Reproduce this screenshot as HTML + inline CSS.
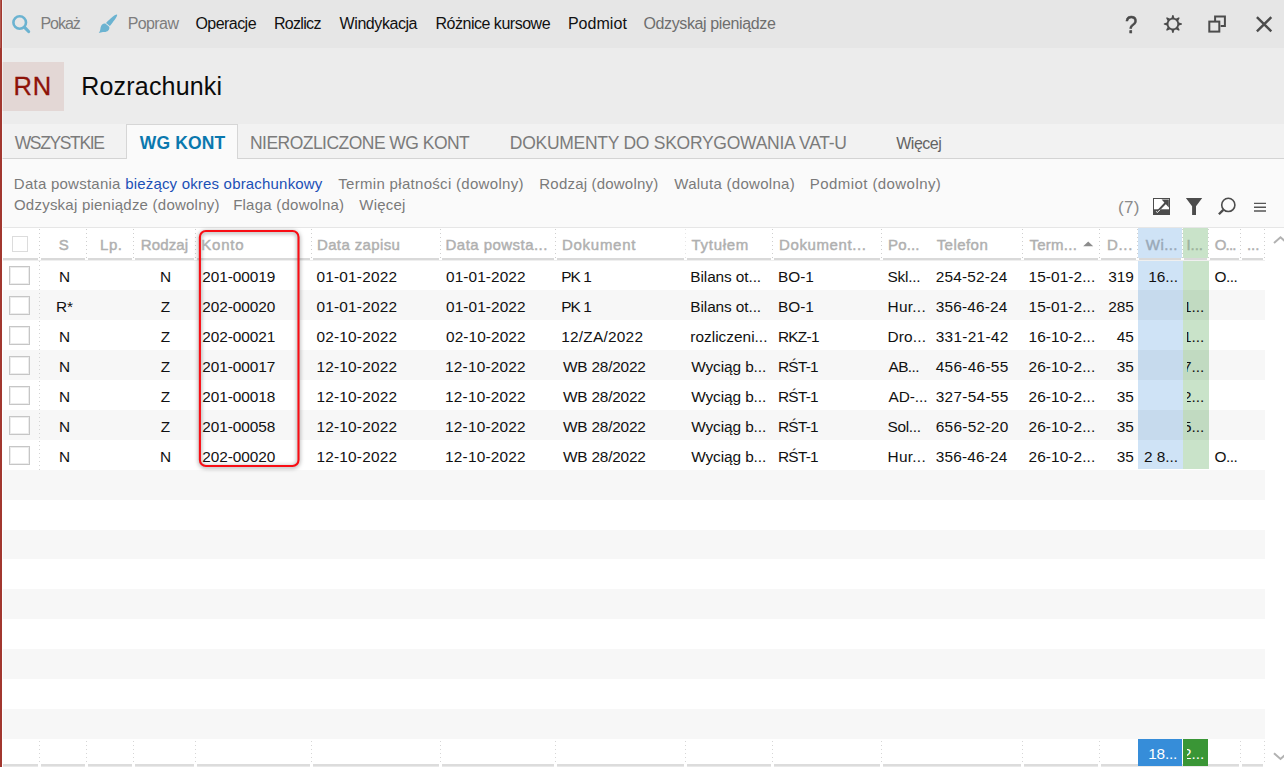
<!DOCTYPE html>
<html lang="pl"><head><meta charset="utf-8"><title>Rozrachunki</title>
<style>
html,body{margin:0;padding:0;}
body{width:1284px;height:767px;overflow:hidden;background:#fff;position:relative;font-family:"Liberation Sans",sans-serif;}
.b{position:absolute;}
.t{position:absolute;white-space:pre;line-height:20px;height:20px;}
.sep{width:1px;background:repeating-linear-gradient(to bottom,var(--c) 0,var(--c) 1px,transparent 1px,transparent 4px);}
svg{position:absolute;overflow:visible;}
</style></head><body>
<div class="b" style="left:0px;top:0px;width:1284px;height:48px;background:#e6e6e6;"></div>
<div class="b" style="left:0px;top:48px;width:1284px;height:76px;background:#ececec;"></div>
<div class="b" style="left:2px;top:62px;width:62px;height:49px;background:#e3d7d5;"></div>
<div class="b" style="left:0px;top:124px;width:1284px;height:35px;background:#f2f2f2;"></div>
<div class="b" style="left:0px;top:159px;width:1284px;height:69px;background:#fafafa;"></div>
<div class="b" style="left:0px;top:158px;width:1284px;height:1px;background:#d4d4d4;"></div>
<div class="b" style="left:126px;top:124px;width:112px;height:34px;background:#fafafa;border:1px solid #d6d6d6;border-bottom:none;box-sizing:border-box;height:35px;"></div>
<div class="b" style="left:3px;top:227px;width:1281px;height:1px;background:#e6e6e6;"></div>
<div class="b" style="left:3px;top:228px;width:1262px;height:30px;background:#fff;"></div>
<div class="b" style="left:3px;top:290px;width:1262px;height:30px;background:#f7f7f7;"></div>
<div class="b" style="left:3px;top:350px;width:1262px;height:30px;background:#f7f7f7;"></div>
<div class="b" style="left:3px;top:410px;width:1262px;height:30px;background:#f7f7f7;"></div>
<div class="b" style="left:3px;top:470px;width:1262px;height:30px;background:#f7f7f7;"></div>
<div class="b" style="left:3px;top:530px;width:1262px;height:29px;background:#f7f7f7;"></div>
<div class="b" style="left:3px;top:589px;width:1262px;height:30px;background:#f7f7f7;"></div>
<div class="b" style="left:3px;top:649px;width:1262px;height:30px;background:#f7f7f7;"></div>
<div class="b" style="left:3px;top:709px;width:1262px;height:30px;background:#f7f7f7;"></div>
<div class="b" style="left:1138px;top:228px;width:44px;height:30px;background:#cfe3f6;"></div>
<div class="b" style="left:1183px;top:228px;width:25px;height:30px;background:#c9e3c9;"></div>
<div class="b" style="left:1138px;top:261px;width:45px;height:29px;background:#cfe3f6;"></div>
<div class="b" style="left:1183px;top:261px;width:26px;height:29px;background:#c9e3c9;"></div>
<div class="b" style="left:1138px;top:290px;width:45px;height:30px;background:#c6daed;"></div>
<div class="b" style="left:1183px;top:290px;width:26px;height:30px;background:#c1dac1;"></div>
<div class="b" style="left:1138px;top:320px;width:45px;height:30px;background:#cfe3f6;"></div>
<div class="b" style="left:1183px;top:320px;width:26px;height:30px;background:#c9e3c9;"></div>
<div class="b" style="left:1138px;top:350px;width:45px;height:30px;background:#c6daed;"></div>
<div class="b" style="left:1183px;top:350px;width:26px;height:30px;background:#c1dac1;"></div>
<div class="b" style="left:1138px;top:380px;width:45px;height:30px;background:#cfe3f6;"></div>
<div class="b" style="left:1183px;top:380px;width:26px;height:30px;background:#c9e3c9;"></div>
<div class="b" style="left:1138px;top:410px;width:45px;height:30px;background:#c6daed;"></div>
<div class="b" style="left:1183px;top:410px;width:26px;height:30px;background:#c1dac1;"></div>
<div class="b" style="left:1138px;top:440px;width:45px;height:29px;background:#cfe3f6;"></div>
<div class="b" style="left:1183px;top:440px;width:26px;height:29px;background:#c9e3c9;"></div>
<div class="b" style="left:3px;top:258px;width:1262px;height:2px;background:#d9d9d9;"></div>
<div class="b" style="left:3px;top:260px;width:1262px;height:1px;background:#efefef;"></div>
<div class="b sep" style="left:39px;top:229px;height:30px;--c:#cfcfcf"></div>
<div class="b sep" style="left:39px;top:741px;height:24px;--c:#d6d6d6"></div>
<div class="b sep" style="left:86px;top:229px;height:30px;--c:#cfcfcf"></div>
<div class="b sep" style="left:86px;top:741px;height:24px;--c:#d6d6d6"></div>
<div class="b sep" style="left:133px;top:229px;height:30px;--c:#cfcfcf"></div>
<div class="b sep" style="left:133px;top:741px;height:24px;--c:#d6d6d6"></div>
<div class="b sep" style="left:195px;top:229px;height:30px;--c:#cfcfcf"></div>
<div class="b sep" style="left:195px;top:741px;height:24px;--c:#d6d6d6"></div>
<div class="b sep" style="left:311px;top:229px;height:30px;--c:#cfcfcf"></div>
<div class="b sep" style="left:311px;top:741px;height:24px;--c:#d6d6d6"></div>
<div class="b sep" style="left:440px;top:229px;height:30px;--c:#cfcfcf"></div>
<div class="b sep" style="left:440px;top:741px;height:24px;--c:#d6d6d6"></div>
<div class="b sep" style="left:555px;top:229px;height:30px;--c:#cfcfcf"></div>
<div class="b sep" style="left:555px;top:741px;height:24px;--c:#d6d6d6"></div>
<div class="b sep" style="left:685px;top:229px;height:30px;--c:#e6e6e6"></div>
<div class="b sep" style="left:685px;top:741px;height:24px;--c:#d6d6d6"></div>
<div class="b sep" style="left:772px;top:229px;height:30px;--c:#cfcfcf"></div>
<div class="b sep" style="left:772px;top:741px;height:24px;--c:#d6d6d6"></div>
<div class="b sep" style="left:881px;top:229px;height:30px;--c:#cfcfcf"></div>
<div class="b sep" style="left:881px;top:741px;height:24px;--c:#d6d6d6"></div>
<div class="b sep" style="left:1022px;top:229px;height:30px;--c:#cfcfcf"></div>
<div class="b sep" style="left:1022px;top:741px;height:24px;--c:#d6d6d6"></div>
<div class="b sep" style="left:1099px;top:229px;height:30px;--c:#cfcfcf"></div>
<div class="b sep" style="left:1099px;top:741px;height:24px;--c:#d6d6d6"></div>
<div class="b sep" style="left:1137px;top:229px;height:30px;--c:#cfcfcf"></div>
<div class="b sep" style="left:1182px;top:229px;height:30px;--c:#cfcfcf"></div>
<div class="b sep" style="left:1208px;top:229px;height:30px;--c:#cfcfcf"></div>
<div class="b sep" style="left:1240px;top:229px;height:30px;--c:#cfcfcf"></div>
<div class="b sep" style="left:1240px;top:741px;height:24px;--c:#d6d6d6"></div>
<div class="b sep" style="left:1264px;top:229px;height:30px;--c:#cfcfcf"></div>
<div class="b sep" style="left:1264px;top:741px;height:24px;--c:#d6d6d6"></div>
<div class="b sep" style="left:39px;top:261px;height:210px;--c:#d4d4d4"></div>
<div class="b" style="left:38px;top:258px;width:3px;height:2px;background:#fff;"></div>
<div class="b" style="left:85px;top:258px;width:3px;height:2px;background:#fff;"></div>
<div class="b" style="left:132px;top:258px;width:3px;height:2px;background:#fff;"></div>
<div class="b" style="left:194px;top:258px;width:3px;height:2px;background:#fff;"></div>
<div class="b" style="left:310px;top:258px;width:3px;height:2px;background:#fff;"></div>
<div class="b" style="left:439px;top:258px;width:3px;height:2px;background:#fff;"></div>
<div class="b" style="left:554px;top:258px;width:3px;height:2px;background:#fff;"></div>
<div class="b" style="left:684px;top:258px;width:3px;height:2px;background:#fff;"></div>
<div class="b" style="left:771px;top:258px;width:3px;height:2px;background:#fff;"></div>
<div class="b" style="left:880px;top:258px;width:3px;height:2px;background:#fff;"></div>
<div class="b" style="left:1021px;top:258px;width:3px;height:2px;background:#fff;"></div>
<div class="b" style="left:1098px;top:258px;width:3px;height:2px;background:#fff;"></div>
<div class="b" style="left:1136px;top:258px;width:3px;height:2px;background:#fff;"></div>
<div class="b" style="left:1181px;top:258px;width:3px;height:2px;background:#fff;"></div>
<div class="b" style="left:1207px;top:258px;width:3px;height:2px;background:#fff;"></div>
<div class="b" style="left:1239px;top:258px;width:3px;height:2px;background:#fff;"></div>
<div class="b" style="left:1263px;top:258px;width:3px;height:2px;background:#fff;"></div>
<div class="b" style="left:12px;top:236px;width:16px;height:16px;background:#fff;border:1px solid #dcdcdc;box-sizing:border-box;"></div>
<div class="b" style="left:9px;top:266px;width:21px;height:19px;background:#fff;border:1px solid #c6c6c6;box-sizing:border-box;box-shadow:inset 0 0 0 1px #ececec;"></div>
<div class="b" style="left:9px;top:296px;width:21px;height:19px;background:#fff;border:1px solid #c6c6c6;box-sizing:border-box;box-shadow:inset 0 0 0 1px #ececec;"></div>
<div class="b" style="left:9px;top:326px;width:21px;height:19px;background:#fff;border:1px solid #c6c6c6;box-sizing:border-box;box-shadow:inset 0 0 0 1px #ececec;"></div>
<div class="b" style="left:9px;top:356px;width:21px;height:19px;background:#fff;border:1px solid #c6c6c6;box-sizing:border-box;box-shadow:inset 0 0 0 1px #ececec;"></div>
<div class="b" style="left:9px;top:386px;width:21px;height:19px;background:#fff;border:1px solid #c6c6c6;box-sizing:border-box;box-shadow:inset 0 0 0 1px #ececec;"></div>
<div class="b" style="left:9px;top:416px;width:21px;height:19px;background:#fff;border:1px solid #c6c6c6;box-sizing:border-box;box-shadow:inset 0 0 0 1px #ececec;"></div>
<div class="b" style="left:9px;top:446px;width:21px;height:19px;background:#fff;border:1px solid #c6c6c6;box-sizing:border-box;box-shadow:inset 0 0 0 1px #ececec;"></div>
<div class="b" style="left:1138px;top:739px;width:44px;height:27px;background:#368dd9;"></div>
<div class="b" style="left:1183px;top:739px;width:25px;height:27px;background:#3a9636;"></div>
<div class="b" style="left:3px;top:764px;width:1262px;height:2px;background:#dcdcdc;"></div>
<div class="b" style="left:3px;top:766px;width:1262px;height:1px;background:#e9e9e9;"></div>
<div class="b" style="left:38px;top:764px;width:3px;height:3px;background:#fff;"></div>
<div class="b" style="left:85px;top:764px;width:3px;height:3px;background:#fff;"></div>
<div class="b" style="left:132px;top:764px;width:3px;height:3px;background:#fff;"></div>
<div class="b" style="left:194px;top:764px;width:3px;height:3px;background:#fff;"></div>
<div class="b" style="left:310px;top:764px;width:3px;height:3px;background:#fff;"></div>
<div class="b" style="left:439px;top:764px;width:3px;height:3px;background:#fff;"></div>
<div class="b" style="left:554px;top:764px;width:3px;height:3px;background:#fff;"></div>
<div class="b" style="left:684px;top:764px;width:3px;height:3px;background:#fff;"></div>
<div class="b" style="left:771px;top:764px;width:3px;height:3px;background:#fff;"></div>
<div class="b" style="left:880px;top:764px;width:3px;height:3px;background:#fff;"></div>
<div class="b" style="left:1021px;top:764px;width:3px;height:3px;background:#fff;"></div>
<div class="b" style="left:1098px;top:764px;width:3px;height:3px;background:#fff;"></div>
<div class="b" style="left:1239px;top:764px;width:3px;height:3px;background:#fff;"></div>
<div class="b" style="left:1263px;top:764px;width:3px;height:3px;background:#fff;"></div>
<div class="b" style="left:1138px;top:739px;width:44px;height:27px;background:#368dd9;"></div>
<div class="b" style="left:1183px;top:739px;width:25px;height:27px;background:#3a9636;"></div>
<div class="b" style="left:0px;top:0px;width:2px;height:767px;background:#a2372f;"></div>
<div class="b" style="left:0px;top:0px;width:1px;height:48px;background:#b1584f;"></div>
<div class="b" style="left:2px;top:0px;width:1px;height:767px;background:rgba(255,255,255,.55);"></div>
<svg width="1284" height="767" viewBox="0 0 1284 767" style="left:0;top:0">
<g fill="none" stroke="#6bb3d1" stroke-linecap="round"><circle cx="19.7" cy="22.5" r="6.3" stroke-width="2.6"/><path d="M24.6 27.4 L28.6 31.5" stroke-width="3.2"/></g>
<g fill="#6bb3d1"><path d="M117 14.6 C117.8 15.4 115.6 19.2 109.9 25.9 L106 22.9 C111.5 17.3 116.1 13.8 117 14.6 Z"/><path d="M105.3 23.6 L109.2 26.8 C110.2 30 106.8 32.6 103.4 32 C101.8 31.8 100.4 32.8 98.8 33 C100.4 31.2 100.2 29.6 100.6 27.6 C101.2 24.8 103.2 23.2 105.3 23.6 Z"/></g>
<path d="M1171.38 17.89 L1172.41 14.91 L1173.39 14.91 L1174.42 17.89 L1176.15 18.60 L1178.98 17.23 L1179.67 17.92 L1178.30 20.75 L1179.01 22.48 L1181.99 23.51 L1181.99 24.49 L1179.01 25.52 L1178.30 27.25 L1179.67 30.08 L1178.98 30.77 L1176.15 29.40 L1174.42 30.11 L1173.39 33.09 L1172.41 33.09 L1171.38 30.11 L1169.65 29.40 L1166.82 30.77 L1166.13 30.08 L1167.50 27.25 L1166.79 25.52 L1163.81 24.49 L1163.81 23.51 L1166.79 22.48 L1167.50 20.75 L1166.13 17.92 L1166.82 17.23 L1169.65 18.60 Z M1177.35 24 A4.45 4.45 0 1 0 1168.45 24 A4.45 4.45 0 1 0 1177.35 24 Z" fill="#4c4c4c" fill-rule="evenodd"/>
<g fill="none" stroke="#4c4c4c" stroke-width="2"><rect x="1209.3" y="21.6" width="10" height="10"/><path d="M1215.1 21 V16.5 H1224.9 V26.1 H1220.6"/></g>
<path d="M1256.9 17.2 L1271.3 31.3 M1271.3 17.2 L1256.9 31.3" stroke="#4c4c4c" stroke-width="2.4" fill="none"/>
<g><rect x="1153.5" y="198.5" width="16" height="16" fill="#fff" stroke="#4c4c4c" stroke-width="1"/><rect x="1153" y="209.3" width="17" height="5.7" fill="#4c4c4c"/><path d="M1158.2 210.6 L1166.2 202.2" stroke="#4c4c4c" stroke-width="2" fill="none"/><path d="M1161.6 199.6 H1168.8 V207.4 Z" fill="#4c4c4c"/><path d="M1156.2 211.2 L1157.3 212.6 L1160 209.8" stroke="#fff" stroke-width="0.9" fill="none"/></g>
<path d="M1185.9 198 H1202.2 L1196 206.2 V215 H1192.1 V206.2 Z" fill="#4c4c4c"/>
<g fill="none" stroke="#4c4c4c"><circle cx="1228.3" cy="204.9" r="6.6" stroke-width="1.6"/><path d="M1223.3 209.9 L1218.9 214.3" stroke-width="2.3"/></g>
<path d="M1254 203.4 H1266 M1254 207.2 H1266 M1254 211 H1266" stroke="#555" stroke-width="1.4" fill="none"/>
<path d="M1083.2 246.3 L1088.2 241.6 L1093.2 246.3 Z" fill="#8c8c8c"/>
<path d="M1274 243 L1280.5 237.3 L1287 243" stroke="#b2b2b2" stroke-width="2" fill="none"/>
<path d="M1274 753.3 L1280.5 759 L1287 753.3" stroke="#b2b2b2" stroke-width="2" fill="none"/>
<rect x="199.9" y="231" width="98.6" height="235" rx="6" ry="6" fill="none" stroke="#f90d14" stroke-width="2.1" style="filter:drop-shadow(0 1px 2px rgba(0,0,0,.5))"/>
</svg>
<nav class="toolbar">
<span class="t" id="t0" style="top:14.46px;font-size:16px;color:#7d7d7d;letter-spacing:-1.038px;left:40.43px;">Pokaż</span>
<span class="t" id="t1" style="top:14.46px;font-size:16px;color:#7d7d7d;letter-spacing:-0.585px;left:127.63px;">Popraw</span>
<span class="t" id="t2" style="top:14.46px;font-size:16px;color:#111;letter-spacing:-0.538px;left:195.38px;">Operacje</span>
<span class="t" id="t3" style="top:14.46px;font-size:16px;color:#111;letter-spacing:-0.665px;left:273.88px;">Rozlicz</span>
<span class="t" id="t4" style="top:14.46px;font-size:16px;color:#111;letter-spacing:-0.429px;left:339.58px;">Windykacja</span>
<span class="t" id="t5" style="top:14.46px;font-size:16px;color:#111;letter-spacing:-0.481px;left:435.48px;">Różnice kursowe</span>
<span class="t" id="t6" style="top:14.46px;font-size:16px;color:#111;letter-spacing:0.050px;left:567.88px;">Podmiot</span>
<span class="t" id="t7" style="top:14.46px;font-size:16px;color:#6e6e6e;letter-spacing:-0.369px;left:643.43px;">Odzyskaj pieniądze</span>
</nav>
<header class="title">
<span class="t" id="t8" style="top:76.16px;font-size:25.5px;color:#8e1208;letter-spacing:0.763px;left:13.62px;-webkit-text-stroke:0.3px;">RN</span>
<span class="t" id="t9" style="top:76.34px;font-size:25px;color:#0a0a0a;letter-spacing:0.190px;left:81.25px;">Rozrachunki</span>
</header>
<nav class="window-buttons">
<span class="t" id="t10" style="top:14.51px;font-size:24.5px;color:#4a4a4a;left:1125.03px;-webkit-text-stroke:0.55px;transform:scaleX(0.9);transform-origin:0 0;">?</span>
</nav>
<nav class="tabs">
<span class="t" id="t11" style="top:132.94px;font-size:17.5px;color:#7b7b7b;letter-spacing:-1.366px;left:14.68px;">WSZYSTKIE</span>
<span class="t" id="t12" style="top:132.94px;font-size:17.5px;color:#0a78ae;font-weight:700;letter-spacing:0.137px;left:139.82px;">WG KONT</span>
<span class="t" id="t13" style="top:132.94px;font-size:17.5px;color:#7b7b7b;letter-spacing:-0.534px;left:250.02px;">NIEROZLICZONE WG KONT</span>
<span class="t" id="t14" style="top:132.94px;font-size:17.5px;color:#7b7b7b;letter-spacing:-0.269px;left:509.77px;">DOKUMENTY DO SKORYGOWANIA VAT-U</span>
<span class="t" id="t15" style="top:134.06px;font-size:16px;color:#636363;letter-spacing:-0.470px;left:896.18px;">Więcej</span>
</nav>
<section class="filters">
<span class="t" id="t16" style="top:173.50px;font-size:15px;color:#7a7a7a;letter-spacing:0.246px;left:13.80px;">Data powstania</span>
<span class="t" id="t17" style="top:173.50px;font-size:15px;color:#1b50b6;letter-spacing:0.185px;left:125.15px;">bieżący okres obrachunkowy</span>
<span class="t" id="t18" style="top:173.50px;font-size:15px;color:#7a7a7a;letter-spacing:0.304px;left:338.30px;">Termin płatności (dowolny)</span>
<span class="t" id="t19" style="top:173.50px;font-size:15px;color:#7a7a7a;letter-spacing:0.194px;left:539.35px;">Rodzaj (dowolny)</span>
<span class="t" id="t20" style="top:173.50px;font-size:15px;color:#7a7a7a;letter-spacing:0.283px;left:674.25px;">Waluta (dowolna)</span>
<span class="t" id="t21" style="top:173.50px;font-size:15px;color:#7a7a7a;letter-spacing:0.429px;left:809.75px;">Podmiot (dowolny)</span>
<span class="t" id="t22" style="top:194.70px;font-size:15px;color:#7a7a7a;letter-spacing:0.232px;left:13.95px;">Odzyskaj pieniądze (dowolny)</span>
<span class="t" id="t23" style="top:194.70px;font-size:15px;color:#7a7a7a;letter-spacing:0.243px;left:233.15px;">Flaga (dowolna)</span>
<span class="t" id="t24" style="top:194.70px;font-size:15px;color:#7a7a7a;letter-spacing:0.233px;left:359.25px;">Więcej</span>
<span class="t" id="t25" style="top:198.31px;font-size:17px;color:#8a8a8a;letter-spacing:0.384px;left:1117.96px;">(7)</span>
</section>
<div class="thead">
<span class="t" id="t26" style="top:234.70px;font-size:15px;color:#b0b0b0;-webkit-text-stroke:0.45px;letter-spacing:-4.626px;left:58.65px;">S</span>
<span class="t" id="t27" style="top:234.70px;font-size:15px;color:#b0b0b0;-webkit-text-stroke:0.45px;letter-spacing:0.492px;left:100.10px;">Lp.</span>
<span class="t" id="t28" style="top:234.70px;font-size:15px;color:#b0b0b0;-webkit-text-stroke:0.45px;letter-spacing:0.144px;left:140.70px;">Rodzaj</span>
<span class="t" id="t29" style="top:234.70px;font-size:15px;color:#b0b0b0;-webkit-text-stroke:0.45px;letter-spacing:0.773px;left:201.35px;">Konto</span>
<span class="t" id="t30" style="top:234.70px;font-size:15px;color:#b0b0b0;-webkit-text-stroke:0.45px;letter-spacing:0.369px;left:316.95px;">Data zapisu</span>
<span class="t" id="t31" style="top:234.70px;font-size:15px;color:#b0b0b0;-webkit-text-stroke:0.45px;letter-spacing:0.459px;left:445.55px;">Data powsta...</span>
<span class="t" id="t32" style="top:234.70px;font-size:15px;color:#b0b0b0;-webkit-text-stroke:0.45px;letter-spacing:0.742px;left:561.90px;">Dokument</span>
<span class="t" id="t33" style="top:234.70px;font-size:15px;color:#b0b0b0;-webkit-text-stroke:0.45px;letter-spacing:0.736px;left:691.45px;">Tytułem</span>
<span class="t" id="t34" style="top:234.70px;font-size:15px;color:#b0b0b0;-webkit-text-stroke:0.45px;letter-spacing:0.595px;left:779.10px;">Dokument...</span>
<span class="t" id="t35" style="top:234.70px;font-size:15px;color:#b0b0b0;-webkit-text-stroke:0.45px;letter-spacing:0.094px;left:888.10px;">Po...</span>
<span class="t" id="t36" style="top:234.70px;font-size:15px;color:#b0b0b0;-webkit-text-stroke:0.45px;letter-spacing:0.454px;left:936.65px;">Telefon</span>
<span class="t" id="t37" style="top:234.70px;font-size:15px;color:#b0b0b0;-webkit-text-stroke:0.45px;letter-spacing:0.255px;left:1029.45px;">Term...</span>
<span class="t" id="t38" style="top:234.70px;font-size:15px;color:#b0b0b0;-webkit-text-stroke:0.45px;letter-spacing:0.677px;left:1106.95px;">D...</span>
<span class="t" id="t39" style="top:234.70px;font-size:15px;color:#9aa9b8;-webkit-text-stroke:0.45px;letter-spacing:0.417px;left:1145.85px;">Wi...</span>
<span class="t" id="t40" style="top:234.70px;font-size:15px;color:#9db39d;-webkit-text-stroke:0.45px;letter-spacing:-0.109px;left:1186.55px;">I...</span>
<span class="t" id="t41" style="top:234.70px;font-size:15px;color:#b0b0b0;-webkit-text-stroke:0.45px;letter-spacing:-0.773px;left:1214.70px;">O...</span>
<span class="t" id="t42" style="top:234.70px;font-size:15px;color:#b0b0b0;-webkit-text-stroke:0.45px;letter-spacing:0.045px;left:1246.90px;">...</span>
</div>
<div class="tr r1">
<span class="t" id="t43" style="top:267.06px;font-size:15.4px;color:#111;left:14.50px;width:100px;text-align:center;">N</span>
<span class="t" id="t44" style="top:267.06px;font-size:15.4px;color:#111;left:115.50px;width:100px;text-align:center;">N</span>
<span class="t" id="t45" style="top:267.06px;font-size:15.4px;color:#111;letter-spacing:-0.071px;left:202.22px;">201-00019</span>
<span class="t" id="t46" style="top:267.06px;font-size:15.4px;color:#111;letter-spacing:0.193px;left:316.52px;">01-01-2022</span>
<span class="t" id="t47" style="top:267.06px;font-size:15.4px;color:#111;letter-spacing:0.093px;left:446.02px;">01-01-2022</span>
<span class="t" id="t48" style="top:267.06px;font-size:15.4px;color:#111;letter-spacing:-0.867px;left:561.17px;">PK 1</span>
<span class="t" id="t49" style="top:267.06px;font-size:15.4px;color:#111;letter-spacing:-0.097px;left:690.32px;">Bilans ot...</span>
<span class="t" id="t50" style="top:267.06px;font-size:15.4px;color:#111;letter-spacing:0.012px;left:777.97px;">BO-1</span>
<span class="t" id="t51" style="top:267.06px;font-size:15.4px;color:#111;letter-spacing:-0.233px;left:887.52px;">Skl...</span>
<span class="t" id="t52" style="top:267.06px;font-size:15.4px;color:#111;letter-spacing:0.192px;left:935.67px;">254-52-24</span>
<span class="t" id="t53" style="top:267.06px;font-size:15.4px;color:#111;letter-spacing:0.089px;left:1028.52px;">15-01-2...</span>
<span class="t" id="t54" style="top:267.06px;font-size:15.4px;color:#111;left:1033.86px;width:100px;text-align:right;">319</span>
<span class="t" id="t55" style="top:267.06px;font-size:15.4px;color:#111;left:1078.16px;width:100px;text-align:right;">16...</span>
<span class="t" id="t56" style="top:267.06px;font-size:15.4px;color:#111;letter-spacing:-0.535px;left:1214.52px;">O...</span>
</div>
<div class="tr r2">
<span class="t" id="t57" style="top:296.93px;font-size:15.4px;color:#111;left:14.50px;width:100px;text-align:center;">R*</span>
<span class="t" id="t58" style="top:296.93px;font-size:15.4px;color:#111;left:115.50px;width:100px;text-align:center;">Z</span>
<span class="t" id="t59" style="top:296.93px;font-size:15.4px;color:#111;letter-spacing:-0.071px;left:202.22px;">202-00020</span>
<span class="t" id="t60" style="top:296.93px;font-size:15.4px;color:#111;letter-spacing:0.193px;left:316.52px;">01-01-2022</span>
<span class="t" id="t61" style="top:296.93px;font-size:15.4px;color:#111;letter-spacing:0.093px;left:446.02px;">01-01-2022</span>
<span class="t" id="t62" style="top:296.93px;font-size:15.4px;color:#111;letter-spacing:-0.867px;left:561.17px;">PK 1</span>
<span class="t" id="t63" style="top:296.93px;font-size:15.4px;color:#111;letter-spacing:-0.097px;left:690.32px;">Bilans ot...</span>
<span class="t" id="t64" style="top:296.93px;font-size:15.4px;color:#111;letter-spacing:0.012px;left:777.97px;">BO-1</span>
<span class="t" id="t65" style="top:296.93px;font-size:15.4px;color:#111;letter-spacing:0.283px;left:887.52px;">Hur...</span>
<span class="t" id="t66" style="top:296.93px;font-size:15.4px;color:#111;letter-spacing:0.192px;left:935.67px;">356-46-24</span>
<span class="t" id="t67" style="top:296.93px;font-size:15.4px;color:#111;letter-spacing:0.089px;left:1028.52px;">15-01-2...</span>
<span class="t" id="t68" style="top:296.93px;font-size:15.4px;color:#111;left:1033.86px;width:100px;text-align:right;">285</span>
<span class="t" id="t69" style="top:296.93px;font-size:15.4px;color:#111;left:1187.40px;width:20px;overflow:hidden;text-indent:-4.4px;">1...</span>
</div>
<div class="tr r3">
<span class="t" id="t70" style="top:326.80px;font-size:15.4px;color:#111;left:14.50px;width:100px;text-align:center;">N</span>
<span class="t" id="t71" style="top:326.80px;font-size:15.4px;color:#111;left:115.50px;width:100px;text-align:center;">Z</span>
<span class="t" id="t72" style="top:326.80px;font-size:15.4px;color:#111;letter-spacing:-0.071px;left:202.22px;">202-00021</span>
<span class="t" id="t73" style="top:326.80px;font-size:15.4px;color:#111;letter-spacing:0.193px;left:316.52px;">02-10-2022</span>
<span class="t" id="t74" style="top:326.80px;font-size:15.4px;color:#111;letter-spacing:0.093px;left:446.02px;">02-10-2022</span>
<span class="t" id="t75" style="top:326.80px;font-size:15.4px;color:#111;letter-spacing:0.249px;left:561.17px;">12/ZA/2022</span>
<span class="t" id="t76" style="top:326.80px;font-size:15.4px;color:#111;letter-spacing:0.010px;left:690.32px;">rozliczeni...</span>
<span class="t" id="t77" style="top:326.80px;font-size:15.4px;color:#111;letter-spacing:-0.741px;left:777.97px;">RKZ-1</span>
<span class="t" id="t78" style="top:326.80px;font-size:15.4px;color:#111;letter-spacing:0.163px;left:887.52px;">Dro...</span>
<span class="t" id="t79" style="top:326.80px;font-size:15.4px;color:#111;letter-spacing:0.305px;left:935.67px;">331-21-42</span>
<span class="t" id="t80" style="top:326.80px;font-size:15.4px;color:#111;letter-spacing:0.089px;left:1028.52px;">16-10-2...</span>
<span class="t" id="t81" style="top:326.80px;font-size:15.4px;color:#111;left:1033.86px;width:100px;text-align:right;">45</span>
<span class="t" id="t82" style="top:326.80px;font-size:15.4px;color:#111;left:1187.40px;width:20px;overflow:hidden;text-indent:-4.4px;">1...</span>
</div>
<div class="tr r4">
<span class="t" id="t83" style="top:356.67px;font-size:15.4px;color:#111;left:14.50px;width:100px;text-align:center;">N</span>
<span class="t" id="t84" style="top:356.67px;font-size:15.4px;color:#111;left:115.50px;width:100px;text-align:center;">Z</span>
<span class="t" id="t85" style="top:356.67px;font-size:15.4px;color:#111;letter-spacing:-0.071px;left:202.22px;">201-00017</span>
<span class="t" id="t86" style="top:356.67px;font-size:15.4px;color:#111;letter-spacing:0.193px;left:316.52px;">12-10-2022</span>
<span class="t" id="t87" style="top:356.67px;font-size:15.4px;color:#111;letter-spacing:0.193px;left:445.12px;">12-10-2022</span>
<span class="t" id="t88" style="top:356.67px;font-size:15.4px;color:#111;letter-spacing:-0.196px;left:562.97px;">WB 28/2022</span>
<span class="t" id="t89" style="top:356.67px;font-size:15.4px;color:#111;letter-spacing:-0.097px;left:691.22px;">Wyciąg b...</span>
<span class="t" id="t90" style="top:356.67px;font-size:15.4px;color:#111;letter-spacing:-0.730px;left:777.97px;">RŚT-1</span>
<span class="t" id="t91" style="top:356.67px;font-size:15.4px;color:#111;letter-spacing:-0.539px;left:888.42px;">AB...</span>
<span class="t" id="t92" style="top:356.67px;font-size:15.4px;color:#111;letter-spacing:0.305px;left:935.67px;">456-46-55</span>
<span class="t" id="t93" style="top:356.67px;font-size:15.4px;color:#111;letter-spacing:0.089px;left:1028.52px;">26-10-2...</span>
<span class="t" id="t94" style="top:356.67px;font-size:15.4px;color:#111;left:1033.86px;width:100px;text-align:right;">35</span>
<span class="t" id="t95" style="top:356.67px;font-size:15.4px;color:#111;left:1187.40px;width:20px;overflow:hidden;text-indent:-4.4px;">7...</span>
</div>
<div class="tr r5">
<span class="t" id="t96" style="top:386.54px;font-size:15.4px;color:#111;left:14.50px;width:100px;text-align:center;">N</span>
<span class="t" id="t97" style="top:386.54px;font-size:15.4px;color:#111;left:115.50px;width:100px;text-align:center;">Z</span>
<span class="t" id="t98" style="top:386.54px;font-size:15.4px;color:#111;letter-spacing:-0.071px;left:202.22px;">201-00018</span>
<span class="t" id="t99" style="top:386.54px;font-size:15.4px;color:#111;letter-spacing:0.193px;left:316.52px;">12-10-2022</span>
<span class="t" id="t100" style="top:386.54px;font-size:15.4px;color:#111;letter-spacing:0.193px;left:445.12px;">12-10-2022</span>
<span class="t" id="t101" style="top:386.54px;font-size:15.4px;color:#111;letter-spacing:-0.196px;left:562.97px;">WB 28/2022</span>
<span class="t" id="t102" style="top:386.54px;font-size:15.4px;color:#111;letter-spacing:-0.097px;left:691.22px;">Wyciąg b...</span>
<span class="t" id="t103" style="top:386.54px;font-size:15.4px;color:#111;letter-spacing:-0.730px;left:777.97px;">RŚT-1</span>
<span class="t" id="t104" style="top:386.54px;font-size:15.4px;color:#111;letter-spacing:-0.036px;left:888.42px;">AD-...</span>
<span class="t" id="t105" style="top:386.54px;font-size:15.4px;color:#111;letter-spacing:0.305px;left:935.67px;">327-54-55</span>
<span class="t" id="t106" style="top:386.54px;font-size:15.4px;color:#111;letter-spacing:0.089px;left:1028.52px;">26-10-2...</span>
<span class="t" id="t107" style="top:386.54px;font-size:15.4px;color:#111;left:1033.86px;width:100px;text-align:right;">35</span>
<span class="t" id="t108" style="top:386.54px;font-size:15.4px;color:#111;left:1187.40px;width:20px;overflow:hidden;text-indent:-4.4px;">2...</span>
</div>
<div class="tr r6">
<span class="t" id="t109" style="top:417.41px;font-size:15.4px;color:#111;left:14.50px;width:100px;text-align:center;">N</span>
<span class="t" id="t110" style="top:417.41px;font-size:15.4px;color:#111;left:115.50px;width:100px;text-align:center;">Z</span>
<span class="t" id="t111" style="top:417.41px;font-size:15.4px;color:#111;letter-spacing:-0.071px;left:202.22px;">201-00058</span>
<span class="t" id="t112" style="top:417.41px;font-size:15.4px;color:#111;letter-spacing:0.193px;left:316.52px;">12-10-2022</span>
<span class="t" id="t113" style="top:417.41px;font-size:15.4px;color:#111;letter-spacing:0.193px;left:445.12px;">12-10-2022</span>
<span class="t" id="t114" style="top:417.41px;font-size:15.4px;color:#111;letter-spacing:-0.196px;left:562.97px;">WB 28/2022</span>
<span class="t" id="t115" style="top:417.41px;font-size:15.4px;color:#111;letter-spacing:-0.097px;left:691.22px;">Wyciąg b...</span>
<span class="t" id="t116" style="top:417.41px;font-size:15.4px;color:#111;letter-spacing:-0.730px;left:777.97px;">RŚT-1</span>
<span class="t" id="t117" style="top:417.41px;font-size:15.4px;color:#111;letter-spacing:-0.316px;left:887.52px;">Sol...</span>
<span class="t" id="t118" style="top:417.41px;font-size:15.4px;color:#111;letter-spacing:0.305px;left:935.67px;">656-52-20</span>
<span class="t" id="t119" style="top:417.41px;font-size:15.4px;color:#111;letter-spacing:0.089px;left:1028.52px;">26-10-2...</span>
<span class="t" id="t120" style="top:417.41px;font-size:15.4px;color:#111;left:1033.86px;width:100px;text-align:right;">35</span>
<span class="t" id="t121" style="top:417.41px;font-size:15.4px;color:#111;left:1187.40px;width:20px;overflow:hidden;text-indent:-4.4px;">5...</span>
</div>
<div class="tr r7">
<span class="t" id="t122" style="top:447.28px;font-size:15.4px;color:#111;left:14.50px;width:100px;text-align:center;">N</span>
<span class="t" id="t123" style="top:447.28px;font-size:15.4px;color:#111;left:115.50px;width:100px;text-align:center;">N</span>
<span class="t" id="t124" style="top:447.28px;font-size:15.4px;color:#111;letter-spacing:-0.071px;left:202.22px;">202-00020</span>
<span class="t" id="t125" style="top:447.28px;font-size:15.4px;color:#111;letter-spacing:0.193px;left:316.52px;">12-10-2022</span>
<span class="t" id="t126" style="top:447.28px;font-size:15.4px;color:#111;letter-spacing:0.193px;left:445.12px;">12-10-2022</span>
<span class="t" id="t127" style="top:447.28px;font-size:15.4px;color:#111;letter-spacing:-0.196px;left:562.97px;">WB 28/2022</span>
<span class="t" id="t128" style="top:447.28px;font-size:15.4px;color:#111;letter-spacing:-0.097px;left:691.22px;">Wyciąg b...</span>
<span class="t" id="t129" style="top:447.28px;font-size:15.4px;color:#111;letter-spacing:-0.730px;left:777.97px;">RŚT-1</span>
<span class="t" id="t130" style="top:447.28px;font-size:15.4px;color:#111;letter-spacing:0.283px;left:887.52px;">Hur...</span>
<span class="t" id="t131" style="top:447.28px;font-size:15.4px;color:#111;letter-spacing:0.192px;left:935.67px;">356-46-24</span>
<span class="t" id="t132" style="top:447.28px;font-size:15.4px;color:#111;letter-spacing:0.089px;left:1028.52px;">26-10-2...</span>
<span class="t" id="t133" style="top:447.28px;font-size:15.4px;color:#111;left:1033.86px;width:100px;text-align:right;">35</span>
<span class="t" id="t134" style="top:447.28px;font-size:15.4px;color:#111;left:1078.16px;width:100px;text-align:right;">2 8...</span>
<span class="t" id="t135" style="top:447.28px;font-size:15.4px;color:#111;letter-spacing:-0.535px;left:1214.52px;">O...</span>
</div>
<div class="tfoot">
<span class="t" id="t136" style="top:743.56px;font-size:15.4px;color:#fff;letter-spacing:-0.269px;left:1148.32px;">18...</span>
<span class="t" id="t137" style="top:743.56px;font-size:15.4px;color:#fff;left:1187.40px;width:20px;overflow:hidden;text-indent:-4.4px;">2...</span>
</div>
</body></html>
